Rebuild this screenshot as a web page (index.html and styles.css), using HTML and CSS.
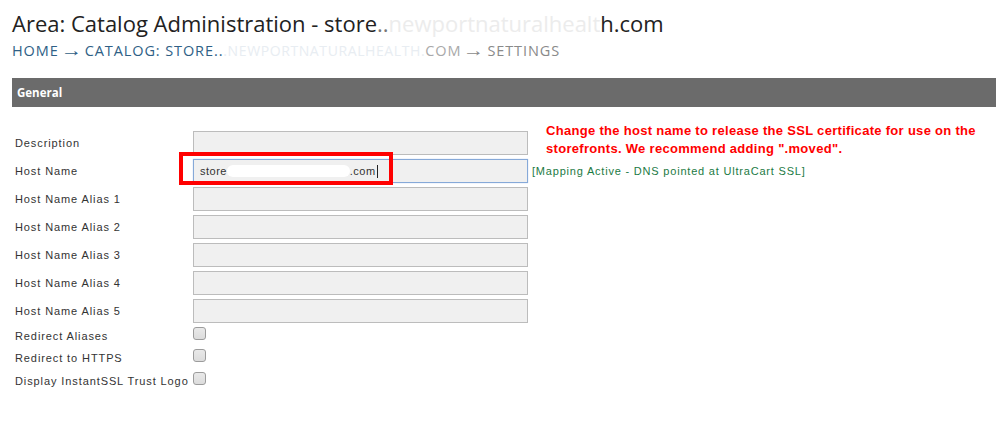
FILE: index.html
```html
<!DOCTYPE html>
<html>
<head>
<meta charset="utf-8">
<title>Catalog Administration</title>
<link rel="stylesheet" href="styles.css">
</head>
<body>
<div class="page">
  <h1 class="title">Area: Catalog Administration - store<span class="dots">..</span><span class="faint">newportnaturalhealt</span>h.com</h1>
  <div class="crumbs">
    <a class="crumb" href="#">HOME</a><span class="arrow">&rarr;</span><a class="crumb" href="#">CATALOG: STORE..<span class="faint">.NEWPORTNATURALHEALTH.</span><span class="dim">COM</span></a><span class="arrow grey">&rarr;</span><span class="current">SETTINGS</span>
  </div>
  <div class="section-bar">General</div>
  <div class="form">
    <div class="note">Change the host name to release the SSL certificate for use on the storefronts. We recommend adding ".moved".</div>

    <label class="label">Description</label>
    <div class="field"><div class="input"></div></div>
    <div class="extra"></div>

    <label class="label">Host Name</label>
    <div class="field">
      <div class="input focus">store<span class="redact">newportnaturalhealth</span>.com<span class="caret"></span></div>
      <div class="highlight"></div>
    </div>
    <div class="extra status">[Mapping Active - DNS pointed at UltraCart SSL]</div>

    <label class="label">Host Name Alias 1</label>
    <div class="field"><div class="input"></div></div>
    <div class="extra"></div>

    <label class="label">Host Name Alias 2</label>
    <div class="field"><div class="input"></div></div>
    <div class="extra"></div>

    <label class="label">Host Name Alias 3</label>
    <div class="field"><div class="input"></div></div>
    <div class="extra"></div>

    <label class="label">Host Name Alias 4</label>
    <div class="field"><div class="input"></div></div>
    <div class="extra"></div>

    <label class="label">Host Name Alias 5</label>
    <div class="field"><div class="input"></div></div>
    <div class="extra"></div>

    <label class="label check-label">Redirect Aliases</label>
    <div class="field"><span class="checkbox"></span></div>
    <div class="extra"></div>

    <label class="label check-label">Redirect to HTTPS</label>
    <div class="field"><span class="checkbox"></span></div>
    <div class="extra"></div>

    <label class="label check-label">Display InstantSSL Trust Logo</label>
    <div class="field"><span class="checkbox"></span></div>
    <div class="extra"></div>
  </div>
</div>
</body>
</html>
```
FILE: styles.css
```css
html, body {
  margin: 0;
  padding: 0;
  background: #ffffff;
}

.page {
  padding: 0 9px 0 12px;
}

.title {
  margin: 0;
  padding-top: 9px;
  height: 28px;
  font-family: "Open Sans", sans-serif;
  font-weight: 400;
  font-size: 22px;
  line-height: 28px;
  color: #222;
  white-space: nowrap;
}

.title .dots {
  color: #777;
}

.faint {
  color: #ececec;
}

.crumbs {
  margin-top: 3px;
  height: 20px;
  font-family: "Open Sans", sans-serif;
  font-size: 14.5px;
  letter-spacing: 0.9px;
  line-height: 20px;
  color: #2f5f86;
  white-space: nowrap;
}

.crumb {
  color: #2f5f86;
  text-decoration: none;
}

.crumb .faint {
  color: #e8edf2;
  letter-spacing: 0.6px;
  font-size: 14px;
}

.crumb .dim {
  color: #a9a9a9;
}

.arrow {
  display: inline-block;
  margin: 0 5px 0 4px;
  font-size: 17px;
  line-height: 20px;
  letter-spacing: 0;
  transform: scaleX(1.25);
  color: #2f5f86;
}

.arrow.grey {
  color: #8a8a8a;
}

.current {
  color: #8a8a8a;
}

.section-bar {
  margin-top: 18px;
  height: 29px;
  background: #6b6b6b;
  color: #ffffff;
  font-family: "Open Sans", sans-serif;
  font-weight: 700;
  font-size: 11.5px;
  line-height: 29px;
  padding-left: 5px;
}

.form {
  position: relative;
  display: grid;
  grid-template-columns: 181px 335px 1fr;
  grid-template-rows: repeat(7, 28px) 22px 23px 22px;
  margin-top: 24px;
  font-family: "Liberation Sans", Arial, sans-serif;
  font-size: 11px;
  color: #333;
}

.label {
  padding-left: 3px;
  display: flex;
  align-items: center;
  letter-spacing: 0.9px;
  white-space: nowrap;
  height: 24px;
}

.label.check-label {
  height: 18px;
}

.field {
  position: relative;
}

.input {
  box-sizing: border-box;
  height: 24px;
  width: 335px;
  background: #f0f0f0;
  border: 1px solid #bcbcbc;
  padding: 0 6px;
  display: flex;
  align-items: center;
  letter-spacing: 0.5px;
  color: #333;
  white-space: nowrap;
}

.input.focus {
  border-color: #86a9d8;
  box-shadow: 0 0 1px #a9c4ea;
}

.redact {
  color: #ffffff;
  background: #ffffff;
  border-radius: 8px;
  letter-spacing: 1px;
}

.caret {
  display: inline-block;
  width: 1px;
  height: 13px;
  background: #222;
  margin-left: 1px;
}

.highlight {
  position: absolute;
  left: -14px;
  top: -7px;
  width: 206px;
  height: 25px;
  border: 4px solid #ff0000;
}

.extra {
  height: 24px;
}

.status {
  display: flex;
  align-items: center;
  padding-left: 4px;
  color: #1c7a44;
  letter-spacing: 0.8px;
  white-space: nowrap;
}

.checkbox {
  display: block;
  box-sizing: border-box;
  width: 13px;
  height: 13px;
  border: 1px solid #9c9c9c;
  border-radius: 3px;
  background: linear-gradient(#e9e9e9, #dcdcdc);
}

.note {
  position: absolute;
  left: 534px;
  top: -9px;
  width: 450px;
  font-family: "Liberation Sans", Arial, sans-serif;
  font-weight: 700;
  font-size: 13px;
  letter-spacing: 0.3px;
  line-height: 18px;
  color: #ff0000;
}
```
